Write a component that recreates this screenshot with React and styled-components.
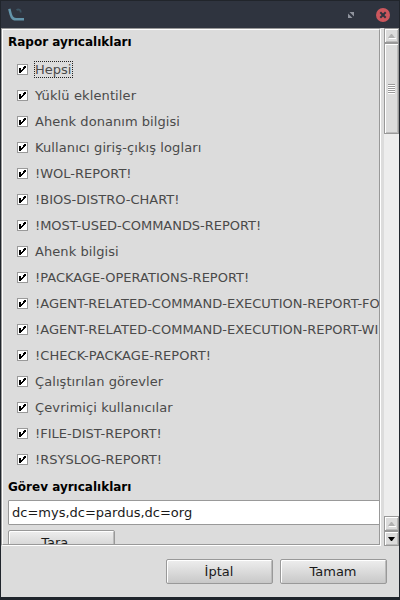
import React from "react";
import styled, { createGlobalStyle } from "styled-components";

const GlobalStyle = createGlobalStyle`
  * { box-sizing: border-box; }
  html, body { margin: 0; background: #20252c; overflow: hidden; }
  body { font-family: "DejaVu Sans", sans-serif; font-size: 13px; }
`;

const Window = styled.div`
  width: 400px;
  height: 600px;
  display: flex;
  flex-direction: column;
  background: #dcdcdc;
  border: solid #20252c;
  border-width: 0 1px 3px;
`;

const TitleBar = styled.header`
  height: 28px;
  flex: none;
  display: flex;
  align-items: center;
  padding: 0 9px 0 7px;
  background: #2f343f;
  border-top: 1px solid #21252b;
`;

const Spacer = styled.div`
  flex: 1;
`;

const ResizeIcon = styled.svg`
  margin-right: 22px;
`;

const Content = styled.div`
  height: 518px;
  flex: none;
  display: flex;
  justify-content: space-between;
`;

const Frame = styled.main`
  width: 380px;
  display: flex;
  border: 1px solid;
  border-color: #999 #fff #fff #999;
`;

const Viewport = styled.section`
  flex: 1;
  min-width: 0;
  overflow: hidden;
  padding: 4px 0 0 4px;
  border: 1px solid;
  border-color: #fff #999 #999 #fff;
`;

const Heading = styled.h2`
  margin: 0;
  padding-left: 1px;
  font-size: 12px;
  font-weight: bold;
  line-height: 16px;
  color: #000;
`;

const CheckList = styled.div`
  padding: 6px 0 0 10px;
  height: 429px;
`;

const CheckRow = styled.label`
  height: 26px;
  display: flex;
  align-items: center;
  white-space: nowrap;
  color: #4a4a4a;
`;

const CheckBox = styled.span`
  width: 11px;
  height: 11px;
  flex: none;
  margin-right: 7px;
  background: #fff;
  border: 1px solid #999;

  svg {
    display: block;
  }
`;

const CheckLabel = styled.span`
  line-height: 15px;
  padding-right: 1px;
  letter-spacing: ${(p) => p.$tracking || 0}px;
  outline: ${(p) => (p.$focused ? "1px dotted #222" : "none")};
`;

const Input = styled.div`
  width: 400px;
  height: 25px;
  margin: 5px 0 5px 1px;
  padding: 0 3px;
  line-height: 23px;
  background: #fff;
  border: 1px solid #999;
  border-radius: 1px;
  color: #1a1a1a;
`;

const Button = styled.button`
  width: 107px;
  height: 25px;
  padding: 0 1px 0 0;
  font: inherit;
  line-height: 22px;
  color: #1a1a1a;
  background: linear-gradient(#eee, #c8c8c8);
  border: 1px solid #999;
  border-radius: 2px;
  box-shadow: inset 1px 1px #fff, inset -1px 0 #bbb;
`;

const ScanButton = styled(Button)`
  display: block;
  margin-left: 1px;
`;

const Scrollbar = styled.aside`
  width: 15px;
  display: flex;
  flex-direction: column;
  background: #ededed;
`;

const ScrollPart = styled.div`
  height: ${(p) => p.$height}px;
  flex: none;
  display: flex;
  align-items: center;
  justify-content: center;
  background: #dcdcdc;
  border: 1px solid #999;
  box-shadow: inset 1px 1px #fff, inset -1px -1px #bbb;
`;

const Footer = styled.footer`
  flex: 1;
  display: flex;
  justify-content: flex-end;
  align-items: flex-start;
  gap: 7px;
  padding: 13px 12px 0 0;
`;

const rows = [
  { label: "Hepsi" },
  { label: "Yüklü eklentiler", tracking: 0.12 },
  { label: "Ahenk donanım bilgisi", tracking: 0.05 },
  { label: "Kullanıcı giriş-çıkış logları", tracking: 0.1 },
  { label: "!WOL-REPORT!" },
  { label: "!BIOS-DISTRO-CHART!" },
  { label: "!MOST-USED-COMMANDS-REPORT!", tracking: -0.03 },
  { label: "Ahenk bilgisi", tracking: 0.07 },
  { label: "!PACKAGE-OPERATIONS-REPORT!" },
  { label: "!AGENT-RELATED-COMMAND-EXECUTION-REPORT-FO" },
  { label: "!AGENT-RELATED-COMMAND-EXECUTION-REPORT-WI" },
  { label: "!CHECK-PACKAGE-REPORT!", tracking: 0.07 },
  { label: "Çalıştırılan görevler", tracking: 0.08 },
  { label: "Çevrimiçi kullanıcılar", tracking: 0.13 },
  { label: "!FILE-DIST-REPORT!" },
  { label: "!RSYSLOG-REPORT!" },
];

const Tick = () => (
  <svg width="9" height="9" viewBox="0 0 9 9" shapeRendering="crispEdges">
    <path d="M6 1h2v2H7v1H6v1H5v1H4v1H3v1H1V3h2v2h1V4h1V2h1z" fill="#000" />
  </svg>
);

const UpArrow = () => (
  <svg width="9" height="6" viewBox="0 0 9 6">
    <path d="M2 5h7v1H2z" fill="#fff" />
    <path d="M4 1h1l3 4H1z" fill="#b0b0b0" />
  </svg>
);

const DownArrow = () => (
  <svg width="9" height="6" viewBox="0 0 9 6">
    <path d="M1 1h7L5 5H4z" fill="#000" />
  </svg>
);

const Grip = () => (
  <svg width="7" height="10" viewBox="0 0 7 10" shapeRendering="crispEdges">
    {[0, 2, 4, 6, 8].map((y) => (
      <g key={y}>
        <path d={`M0 ${y}h7v1H0z`} fill="#999" />
        <path d={`M0 ${y + 1}h7v1H0z`} fill="#fff" />
      </g>
    ))}
  </svg>
);

const AppIcon = () => (
  <svg width="17" height="14" viewBox="0 0 17 14" fill="none">
    <path d="M1.3 .8C2.3 4 2.3 6.5 3.8 9C5 11 6 11.3 8 11.3h8" stroke="#6394aa" strokeWidth="2.5" />
    <path d="M8.5 2.1c2.2-1.4 4.6-.2 4 2.4" stroke="#3d5563" strokeWidth="1.8" />
  </svg>
);

export default function App() {
  return (
    <>
      <GlobalStyle />
      <Window>
        <TitleBar>
          <AppIcon />
          <Spacer />
          <ResizeIcon width="6" height="6" viewBox="0 0 6 6">
            <path d="M1.5 0H6v4.5zM0 1.5L4.5 6H0z" fill="#90949e" />
          </ResizeIcon>
          <svg width="14" height="14" viewBox="0 0 14 14">
            <circle cx="7" cy="7" r="7" fill="#cc575d" />
            <path d="M4.3 4.3l5.4 5.4m0-5.4l-5.4 5.4" stroke="#2f343f" strokeWidth="2" />
          </svg>
        </TitleBar>
        <Content>
          <Frame>
            <Viewport>
              <Heading>Rapor ayrıcalıkları</Heading>
              <CheckList>
                {rows.map(({ label, tracking }, i) => (
                  <CheckRow key={label}>
                    <CheckBox>
                      <Tick />
                    </CheckBox>
                    <CheckLabel $focused={i === 0} $tracking={tracking}>
                      {label}
                    </CheckLabel>
                  </CheckRow>
                ))}
              </CheckList>
              <Heading>Görev ayrıcalıkları</Heading>
              <Input>dc=mys,dc=pardus,dc=org</Input>
              <ScanButton>Tara...</ScanButton>
            </Viewport>
          </Frame>
          <Scrollbar>
            <ScrollPart $height={15}>
              <UpArrow />
            </ScrollPart>
            <ScrollPart $height={91}>
              <Grip />
            </ScrollPart>
            <Spacer />
            <ScrollPart $height={15}>
              <UpArrow />
            </ScrollPart>
            <ScrollPart $height={15}>
              <DownArrow />
            </ScrollPart>
          </Scrollbar>
        </Content>
        <Footer>
          <Button>İptal</Button>
          <Button>Tamam</Button>
        </Footer>
      </Window>
    </>
  );
}
